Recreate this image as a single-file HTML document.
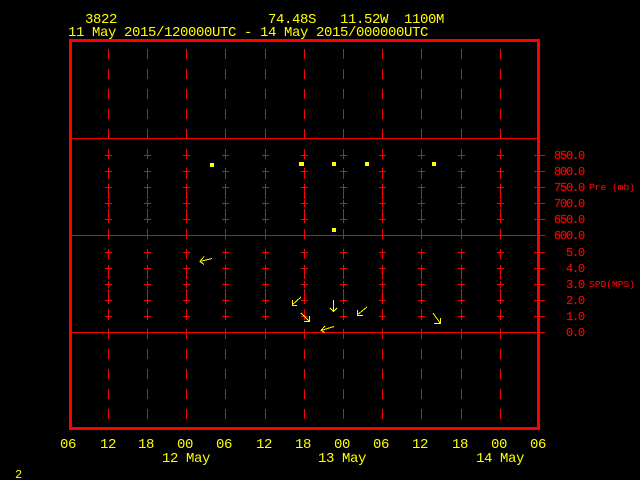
<!DOCTYPE html>
<html><head><meta charset="utf-8"><style>
html,body{margin:0;padding:0;background:#000;width:640px;height:480px;overflow:hidden}
svg{display:block}
text{font-family:"Liberation Mono",monospace;white-space:pre}
.y{fill:#ff0;font-size:14px;letter-spacing:-.4px}
.r{fill:#f00;stroke:#f00;stroke-width:.15px;font-size:12px;letter-spacing:-1.2px}
.s{fill:#f00;stroke:#f00;stroke-width:.1px;font-size:9.6px;letter-spacing:0}
</style></head><body>
<svg width="640" height="480" viewBox="0 0 640 480" xmlns="http://www.w3.org/2000/svg">
<rect width="640" height="480" fill="#000"/>
<defs>
<path id="t" d="M-3 155.5H4M.5 152V159M-3 171.5H4M.5 168V175M-3 187.5H4M.5 184V191M-3 203.5H4M.5 200V207M-3 219.5H4M.5 216V223M-3 252.5H4M.5 249V256M-3 268.5H4M.5 265V272M-3 284.5H4M.5 281V288M-3 300.5H4M.5 297V304M-3 316.5H4M.5 313V320"/>
</defs>
<g stroke="#f00" stroke-width="1" fill="none" shape-rendering="crispEdges">
<path stroke-dasharray="10 10" d="M108.5 49V419M147.5 49V419M186.5 49V419M225.5 49V419M265.5 49V419M304.5 49V419M343.5 49V419M382.5 49V419M421.5 49V419M461.5 49V419M500.5 49V419"/>
<use href="#t" x="108"/><use href="#t" x="147"/><use href="#t" x="186"/><use href="#t" x="225"/><use href="#t" x="265"/><use href="#t" x="304"/><use href="#t" x="343"/><use href="#t" x="382"/><use href="#t" x="421"/><use href="#t" x="461"/><use href="#t" x="500"/>
<path d="M71 138.5H538M71 235.5H545M71 332.5H545"/>
<path d="M534 155.5H545M534 171.5H545M534 187.5H545M534 203.5H545M534 219.5H545M534 252.5H545M534 268.5H545M534 284.5H545M534 300.5H545M534 316.5H545"/>
</g>
<rect x="70.5" y="40.5" width="468" height="388" fill="none" stroke="#f00" stroke-width="3" shape-rendering="crispEdges"/>
<g fill="#ff0" shape-rendering="crispEdges">
<rect x="210" y="163" width="4" height="4"/>
<rect x="299" y="162" width="5" height="4"/>
<rect x="332" y="162" width="4" height="4"/>
<rect x="365" y="162" width="4" height="4"/>
<rect x="432" y="162" width="4" height="4"/>
<rect x="332" y="228" width="4" height="4"/>
</g>
<g stroke="#ff0" stroke-width="1" fill="none" shape-rendering="crispEdges">
<path d="M212 258.500L200 261.500M204 256.500L200 261.500L204 264.500"/>
<path d="M301 297L292 305M292.500 300V305.500H297"/>
<path d="M301 313L309 321M309.500 316V321.500H304"/>
<path d="M333.500 300V311M330 308L333.500 311.500L337 308"/>
<path d="M334 326.500L321 330.500M325 326L321 330.500L325 332.500"/>
<path d="M367 307L357 315M357.500 310V315.500H363"/>
<path d="M433 313L440 323M440.500 318V323.500H434"/>
</g>
<g class="y">
<text class="y" x="85" y="23">3822</text>
<text class="y" x="268" y="23">74.48S</text>
<text class="y" x="340" y="23">11.52W</text>
<text class="y" x="404" y="23">1100M</text>
<text class="y" x="68" y="36">11 May 2015/120000UTC - 14 May 2015/000000UTC</text>
<text class="y" x="60" y="448">06</text>
<text class="y" x="100" y="448">12</text>
<text class="y" x="138" y="448">18</text>
<text class="y" x="177" y="448">00</text>
<text class="y" x="216" y="448">06</text>
<text class="y" x="256" y="448">12</text>
<text class="y" x="295" y="448">18</text>
<text class="y" x="334" y="448">00</text>
<text class="y" x="373" y="448">06</text>
<text class="y" x="412" y="448">12</text>
<text class="y" x="452" y="448">18</text>
<text class="y" x="491" y="448">00</text>
<text class="y" x="530" y="448">06</text>
<text class="y" x="162" y="462">12 May</text>
<text class="y" x="318" y="462">13 May</text>
<text class="y" x="476" y="462">14 May</text>
<text class="y" x="15" y="478" style="font-size:12px">2</text>
</g>
<text class="r" x="554" y="159">850.0</text>
<text class="r" x="554" y="175">800.0</text>
<text class="r" x="554" y="191">750.0</text>
<text class="r" x="554" y="207">700.0</text>
<text class="r" x="554" y="223">650.0</text>
<text class="r" x="554" y="239">600.0</text>
<text class="r" x="566" y="256">5.0</text>
<text class="r" x="566" y="272">4.0</text>
<text class="r" x="566" y="288">3.0</text>
<text class="r" x="566" y="304">2.0</text>
<text class="r" x="566" y="320">1.0</text>
<text class="r" x="566" y="336">0.0</text>
<text class="s" x="589" y="190">Pre (mb)</text>
<text class="s" x="589" y="287">SPD(MPS)</text>
</svg>
</body></html>
